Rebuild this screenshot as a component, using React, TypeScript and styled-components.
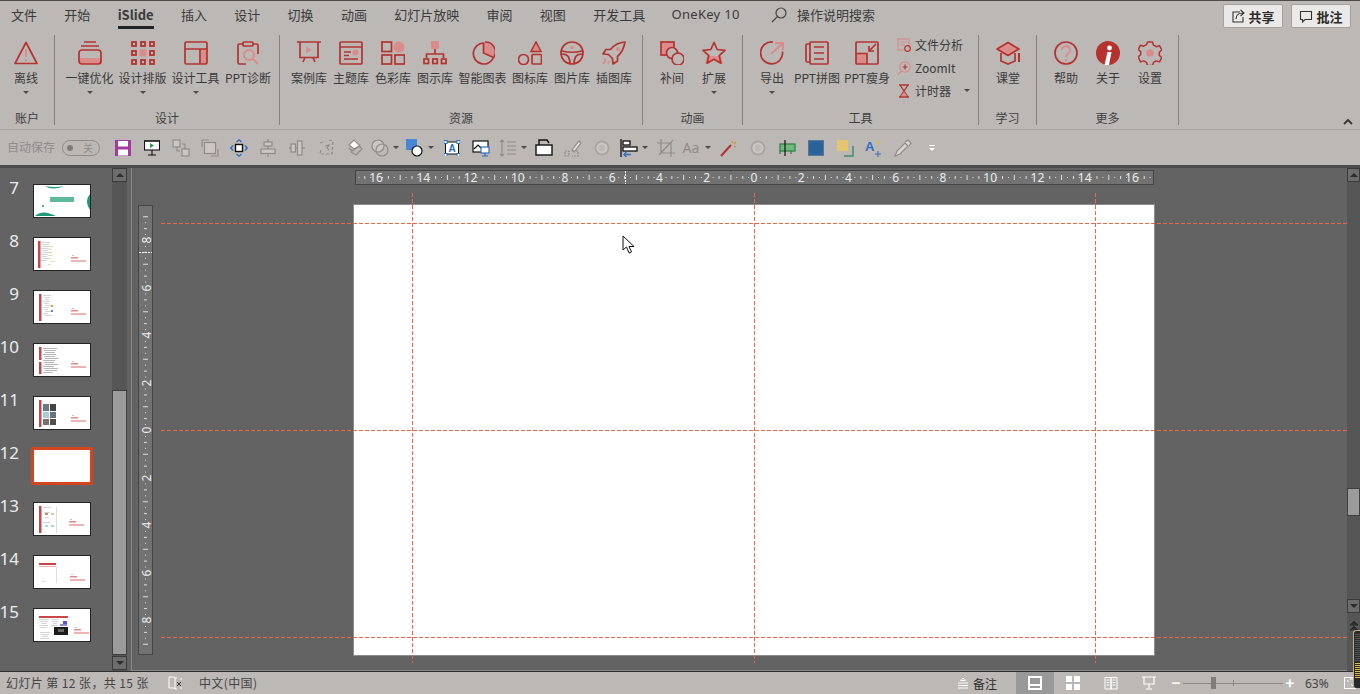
import React from "react";
import styled, { createGlobalStyle } from "styled-components";

const RED = "#b5322f";
const PALE = "#d98c8a";
const GRAY = "#8f8b89";
const DARK = "#3a3a3a";
const UI_FONT = `"Noto Sans CJK SC", "Noto Sans", sans-serif`;

const Global = createGlobalStyle`
  html, body { margin: 0; padding: 0; background: #bcb8b5; overflow: hidden; }
  * { box-sizing: border-box; }
`;

const Page = styled.div`
  position: relative;
  width: 1360px;
  height: 694px;
  display: flex;
  flex-direction: column;
  overflow: hidden;
  background: #bcb8b5;
  color: ${DARK};
  font-family: ${UI_FONT};
  font-size: 12px;
  border-top: 1px solid #4c4c4c;
`;

/* ---------- tab row ---------- */
const TabBar = styled.div`
  height: 29px;
  display: flex;
  align-items: flex-start;
  padding-left: 11px;
  gap: 27.3px;
  flex: none;
`;
const Tab = styled.div<{ $active?: boolean }>`
  height: 28px;
  line-height: 27px;
  font-size: 13px;
  white-space: nowrap;
  font-weight: ${(p) => (p.$active ? 700 : 400)};
  border-bottom: 3px solid ${(p) => (p.$active ? "#222" : "transparent")};
`;
const Latin = styled(Tab)`
  font-family: "Noto Sans", sans-serif;
  letter-spacing: 0.3px;
  margin-left: -1px;
`;
const SearchBox = styled.div`
  display: flex;
  align-items: center;
  gap: 10px;
  height: 27px;
  margin-left: 4px;
  font-size: 13px;
`;
const TopActions = styled.div`
  margin-left: auto;
  margin-right: 9px;
  margin-top: 3px;
  display: flex;
  gap: 8px;
`;
const TopButton = styled.div`
  width: 60px;
  height: 24px;
  display: flex;
  align-items: center;
  justify-content: center;
  gap: 3px;
  background: #ebe9e7;
  border: 1px solid #a5a19e;
  border-radius: 2px;
  font-size: 13px;
  font-weight: 700;
  color: #2b2b2b;
`;

/* ---------- ribbon ---------- */
const Ribbon = styled.div`
  position: relative;
  height: 100px;
  flex: none;
  display: flex;
  align-items: flex-start;
  padding-top: 5px;
  border-bottom: 1px solid #a5a19e;
`;
const Group = styled.section<{ $w: number }>`
  width: ${(p) => p.$w}px;
  height: 90px;
  flex: none;
  display: flex;
  flex-direction: column;
  border-right: 1px solid #858280;
`;
const GroupItems = styled.div<{ $pad: number }>`
  flex: 1;
  display: flex;
  align-items: flex-start;
  padding-left: ${(p) => p.$pad}px;
`;
const GroupLabel = styled.div`
  height: 16px;
  line-height: 17px;
  text-align: center;
  font-size: 12px;
  color: #3f3f3f;
`;
const Item = styled.div<{ $w: number }>`
  width: ${(p) => p.$w}px;
  flex: none;
  display: flex;
  flex-direction: column;
  align-items: center;
  padding-top: 6px;
`;
const ItemText = styled.div`
  margin-top: 4px;
  height: 17px;
  line-height: 17px;
  white-space: nowrap;
  font-size: 12px;
`;
const Caret = styled.span`
  display: block;
  width: 0;
  height: 0;
  border-left: 3px solid transparent;
  border-right: 3px solid transparent;
  border-top: 3px solid #4a4a4a;
`;
const ItemCaret = styled(Caret)`
  margin-top: 5px;
`;
const SmallColumn = styled.div`
  display: flex;
  flex-direction: column;
  margin-left: 4px;
  margin-top: -2px;
`;
const SmallRow = styled.div`
  height: 23px;
  display: flex;
  align-items: center;
  gap: 4px;
  font-size: 12px;
  white-space: nowrap;
`;
const RowCaret = styled(Caret)`
  margin-left: 9px;
`;
const Collapse = styled.div`
  position: absolute;
  right: 7px;
  bottom: 2px;
  display: flex;
`;

/* ---------- quick access ---------- */
const Quick = styled.div`
  height: 35px;
  flex: none;
  display: flex;
  align-items: center;
  padding-left: 7px;
`;
const AutoSave = styled.div`
  color: ${GRAY};
  font-size: 12px;
  white-space: nowrap;
  width: 55px;
  margin-bottom: 2px;
`;
const Toggle = styled.div`
  width: 38px;
  height: 16px;
  margin-right: 8px;
  border: 1px solid ${GRAY};
  border-radius: 8px;
  display: flex;
  align-items: center;
  justify-content: space-between;
  padding: 0 6px 0 4px;
  color: ${GRAY};
  font-size: 10px;
  line-height: 14px;
`;
const ToggleDot = styled.span`
  width: 6px;
  height: 6px;
  border-radius: 50%;
  background: #7d7a78;
`;
const QSlot = styled.div<{ $w: number }>`
  width: ${(p) => p.$w}px;
  flex: none;
  display: flex;
  align-items: center;
  justify-content: center;
`;
const QCaret = styled(Caret)`
  margin-left: 4px;
`;

/* ---------- workspace ---------- */
const Workspace = styled.div`
  flex: 1;
  min-height: 0;
  display: flex;
  background: #636363;
  border-top: 3px solid #4b4b4b;
  border-bottom: 1px solid #2f2f2f;
`;
const SlidePane = styled.div`
  width: 112px;
  flex: none;
  padding-top: 16px;
  display: flex;
  flex-direction: column;
  gap: 19px;
`;
const SlideRow = styled.div`
  height: 34px;
  display: flex;
  align-items: flex-start;
  padding-right: 21px;
  justify-content: flex-end;
  position: relative;
`;
const SlideNo = styled.span`
  position: absolute;
  right: 93px;
  top: -7px;
  font-family: "Noto Sans", sans-serif;
  font-size: 17px;
  line-height: 22px;
  color: #ededed;
`;
const Thumb = styled.div<{ $active?: boolean }>`
  width: 58px;
  height: 34px;
  background: #fff;
  border: 1px solid ${(p) => (p.$active ? "#d2451f" : "#242424")};
  outline: ${(p) => (p.$active ? "2px solid #d2451f" : "none")};
  display: flex;
`;
const ScrollTrack = styled.div<{ $w: number }>`
  width: ${(p) => p.$w}px;
  flex: none;
  background: #565656;
  display: flex;
  flex-direction: column;
  position: relative;
`;
const ScrollBtn = styled.div<{ $mt?: number }>`
  height: 14px;
  margin-top: ${(p) => p.$mt ?? 0}px;
  background: #6d6d6d;
  border: 1px solid #3b3b3b;
  display: flex;
  align-items: center;
  justify-content: center;
  flex: none;
`;
const ScrollUp = styled.span`
  width: 0;
  height: 0;
  border-left: 4px solid transparent;
  border-right: 4px solid transparent;
  border-bottom: 4px solid #2d2d2d;
`;
const ScrollDown = styled.span`
  width: 0;
  height: 0;
  border-left: 4px solid transparent;
  border-right: 4px solid transparent;
  border-top: 4px solid #2d2d2d;
`;
const ScrollThumb = styled.div<{ $mt: number; $h: number }>`
  height: ${(p) => p.$h}px;
  margin-top: ${(p) => p.$mt}px;
  background: #9b9b9b;
  border: 1px solid #3f3f3f;
  flex: none;
`;
const PageJump = styled.div`
  margin-top: 8px;
  display: flex;
  justify-content: center;
`;
const Editor = styled.div`
  position: relative;
  flex: 1;
  margin-left: 4px;
  padding-top: 2px;
  border-left: 1px solid #8a8a8a;
  border-bottom: 1px solid #8a8a8a;
`;
const TopRuler = styled.div`
  position: relative;
  width: 799px;
  height: 15px;
  margin-left: 223px;
  background: #727272;
  border: 1px solid #454545;
  display: flex;
`;
const SlideArea = styled.div`
  display: flex;
  align-items: flex-start;
  margin-top: 19px;
  padding-left: 6px;
`;
const LeftRuler = styled.div`
  position: relative;
  width: 15px;
  height: 450px;
  margin-top: 1px;
  background: #727272;
  border: 1px solid #454545;
  display: flex;
  flex: none;
`;
const Slide = styled.div`
  width: 802px;
  height: 452px;
  margin-left: 200px;
  background: #fff;
  border: 1px solid #8c8c8c;
  flex: none;
`;
const TopNum = styled.span`
  position: absolute;
  top: 0;
  line-height: 13px;
  font-family: "Noto Sans", sans-serif;
  font-size: 12px;
  color: #ececec;
  transform: translateX(-50%);
`;
const LeftNum = styled.span`
  position: absolute;
  left: 6.5px;
  line-height: 13px;
  font-family: "Noto Sans", sans-serif;
  font-size: 12px;
  color: #ececec;
  transform: translate(-50%, -50%) rotate(-90deg);
`;
const HGuide = styled.div<{ $top: number }>`
  position: absolute;
  left: 29px;
  right: 0;
  top: ${(p) => p.$top}px;
  height: 1px;
  background: repeating-linear-gradient(90deg, #e2694a 0 4px, transparent 4px 6px);
`;
const VGuide = styled.div<{ $left: number }>`
  position: absolute;
  left: ${(p) => p.$left}px;
  top: 25px;
  height: 470px;
  width: 1px;
  background: repeating-linear-gradient(180deg, #e2694a 0 4px, transparent 4px 6px);
`;
const Cursor = styled.div`
  position: absolute;
  left: 490px;
  top: 67px;
  display: flex;
`;
const RecorderWidget = styled.div`
  position: absolute;
  right: 0;
  top: 629px;
  width: 7px;
  height: 58px;
  background: #2a2a2a;
  border-left: 1px solid #b9ab8c;
  border-top: 1px solid #b9ab8c;
  border-radius: 3px 0 0 3px;
  display: flex;
`;

/* ---------- status bar ---------- */
const Status = styled.div`
  height: 22px;
  flex: none;
  display: flex;
  align-items: center;
  padding-left: 6px;
  color: #444;
  font-size: 12px;
`;
const StatusText = styled.span`
  white-space: nowrap;
  letter-spacing: 0.4px;
  margin-bottom: 2px;
`;
const StatusIcon = styled.span`
  display: flex;
  margin: 0 17px 0 19px;
`;
const Notes = styled.div`
  margin-left: auto;
  display: flex;
  align-items: center;
  gap: 4px;
  margin-right: 19px;
  color: #2e2e2e;
`;
const ViewBtn = styled.div<{ $active?: boolean }>`
  width: 38px;
  height: 22px;
  display: flex;
  align-items: center;
  justify-content: center;
  background: ${(p) => (p.$active ? "#999" : "transparent")};
`;
const ZoomArea = styled.div`
  display: flex;
  align-items: center;
  margin-left: 1px;
  padding-right: 4px;
`;
const ZoomSign = styled.span`
  width: 14px;
  text-align: center;
  color: #fff;
  font-size: 15px;
  font-weight: 700;
  line-height: 20px;
`;
const ZoomSlider = styled.div`
  position: relative;
  width: 100px;
  height: 12px;
  display: flex;
  align-items: center;
`;
const ZoomLine = styled.span`
  flex: 1;
  height: 1px;
  background: #8a8785;
`;
const ZoomTick = styled.span`
  position: absolute;
  left: 50px;
  top: 3px;
  width: 1px;
  height: 6px;
  background: #8a8785;
`;
const ZoomThumb = styled.span`
  position: absolute;
  left: 28px;
  top: 0;
  width: 5px;
  height: 12px;
  background: #7e7b79;
`;
const ZoomPct = styled.span`
  font-family: "Noto Sans", sans-serif;
  width: 47px;
  padding-left: 8px;
  color: #444;
`;

/* ---------- icon helpers ---------- */
type SvgProps = { s?: number; v?: number; sw?: number; c?: string; children: React.ReactNode };
const Ico = ({ s = 24, v, sw = 1.7, c = RED, children }: SvgProps) => (
  <svg
    width={s}
    height={s}
    viewBox={`0 0 ${v ?? s} ${v ?? s}`}
    fill="none"
    stroke={c}
    strokeWidth={sw}
    style={{ display: "block", flex: "none" }}
  >
    {children}
  </svg>
);
const pale = { fill: PALE, stroke: "none" };

const ribbonIcons: Record<string, React.ReactNode> = {
  warn: (
    <>
      <path d="M12 1.5 L23 22.5 H1 Z" strokeLinejoin="round" />
      <path d="M12 8v8M12 18v2.5" stroke={PALE} strokeWidth="2" />
    </>
  ),
  stack: (
    <>
      <rect x="1" y="17" width="22" height="6" {...pale} />
      <path d="M6 1h12M3 5h18" />
      <rect x="1" y="9" width="22" height="14" rx="3" />
    </>
  ),
  grid: (
    <>
      {[0, 1, 2].flatMap((r) =>
        [0, 1, 2].map((c) =>
          r === 1 && c === 1 ? (
            <rect key="m" x="8.5" y="8.5" width="7" height="7" {...pale} />
          ) : (
            <rect key={`${r}${c}`} x={1 + c * 9} y={1 + r * 9} width="4" height="4" strokeWidth="1.8" />
          )
        )
      )}
    </>
  ),
  layout: (
    <>
      <rect x="17" y="8" width="6" height="15" {...pale} />
      <rect x="1" y="1" width="22" height="22" rx="1.5" />
      <path d="M1 8h22M16 8v15" />
    </>
  ),
  clip: (
    <>
      <path d="M7 3H3.5A1.5 1.5 0 0 0 2 4.5v17A1.5 1.5 0 0 0 3.5 23H10M17 3h3.5A1.5 1.5 0 0 1 22 4.5V13" />
      <rect x="7" y="1" width="10" height="4" rx="1" />
      <circle cx="13" cy="14" r="5" stroke={PALE} strokeWidth="2" />
      <path d="M17 18l5 5" stroke={PALE} strokeWidth="2" />
    </>
  ),
  board: (
    <>
      <path d="M0 1h24M3 1v15.5h18V1M6 21l2-4.5M18 21l-2-4.5" />
      <path d="M9 5.5l6 3.5-6 3.5z" {...pale} />
    </>
  ),
  theme: (
    <>
      <rect x="1" y="1" width="22" height="22" rx="1" />
      <path d="M1 6h22M5 11h7M5 14.5h5M5 18h14" />
      <circle cx="16.5" cy="11.5" r="3" {...pale} />
    </>
  ),
  colors: (
    <>
      <rect x="1" y="1" width="9.5" height="9.5" />
      <circle cx="18" cy="6" r="5.5" {...pale} />
      <rect x="1" y="14" width="9.5" height="9" />
      <rect x="14" y="14" width="9.5" height="9" />
    </>
  ),
  org: (
    <>
      <rect x="8" y="0" width="8" height="8" {...pale} />
      <path d="M12 8v5M3.5 17v-4h17v4" />
      <rect x="1" y="18" width="4.5" height="4.5" />
      <rect x="9.8" y="18" width="4.5" height="4.5" />
      <rect x="18.5" y="18" width="4.5" height="4.5" />
    </>
  ),
  pie: (
    <>
      <path d="M13 11V1.5a10.5 10.5 0 0 1 9.5 15z" {...pale} />
      <path d="M12.5 2a10.5 10.5 0 1 0 10 14.5L12.5 12z" />
      <path d="M14 1a10 10 0 0 1 9 15" />
    </>
  ),
  shapes: (
    <>
      <path d="M18 1l5 9.5H13z" fill={PALE} strokeWidth="1.5" />
      <circle cx="5.5" cy="18.5" r="5" />
      <rect x="14" y="13.5" width="9.5" height="9.5" rx="1" />
    </>
  ),
  wheel: (
    <>
      <circle cx="12" cy="12" r="11" />
      <path d="M1.5 13c4 0 6 1 7 3s1.5 4 1.5 6.5M22.5 13c-4 0-6 1-7 3s-1.5 4-1.5 6.5M2 10c6 1.5 14 1.5 20 0" />
      <circle cx="12" cy="6.5" r="1.8" {...pale} />
    </>
  ),
  rocket: (
    <>
      <path d="M23 1c-6 .5-11 3-14.5 7.5H4L1 13l5.5.5 4 4 .5 5.5 4.5-3v-4.5c4.500-4 6.500-9 7.500-14.500z" strokeLinejoin="round" />
      <circle cx="16" cy="8" r="2" {...pale} />
      <path d="M1 23l3-4M2 19l1.500-1.500M6 22l1.500-2" stroke={PALE} />
    </>
  ),
  tween: (
    <>
      <rect x="1" y="1" width="13" height="13" {...pale} />
      <rect x="1" y="1" width="13" height="13" />
      <circle cx="12" cy="12" r="5.5" fill="#bcb8b5" />
      <circle cx="18" cy="18" r="6" fill="#bcb8b5" />
    </>
  ),
  star: (
    <>
      <path d="M5 15h14l2 8-9-4-9 4z" {...pale} />
      <path d="M12 1.5l3.2 7 7.8.8-5.8 5.3 1.7 7.6-6.9-4-6.9 4 1.7-7.6L1 9.3l7.8-.8z" strokeLinejoin="round" />
    </>
  ),
  export: (
    <>
      <path d="M22.5 10.5A11 11 0 1 1 13 1" />
      <path d="M11 13L22 3M15 2h8v7" stroke={PALE} strokeWidth="2" />
    </>
  ),
  book: (
    <>
      <path d="M5 3H2.5A1.5 1.5 0 0 0 1 4.5v15A1.5 1.5 0 0 0 2.5 21H5" />
      <rect x="5" y="1" width="18" height="22" rx="1" />
      <path d="M9 6h10M9 12h10M9 18h10" />
    </>
  ),
  slim: (
    <>
      <rect x="1" y="13" width="10" height="10" {...pale} />
      <rect x="1" y="1" width="22" height="22" rx="1" />
      <path d="M1 12.5h11V23M21 3l-7 7M14 5v5h5" />
    </>
  ),
  cap: (
    <>
      <path d="M12 1.5L23 8l-11 6.5L1 8z" fill={PALE} strokeLinejoin="round" />
      <path d="M5 12v8l7 3 7-3v-8" />
      <path d="M23 12v9" strokeWidth="2" />
    </>
  ),
  help: (
    <>
      <circle cx="12" cy="12" r="11" />
      <path d="M8 9a4 4 0 1 1 6 3.5c-1.4.9-2 1.500-2 3.500" stroke={PALE} strokeWidth="2" />
      <circle cx="12" cy="19" r="1.2" {...pale} />
    </>
  ),
  info: (
    <>
      <circle cx="12" cy="12" r="12" fill={RED} stroke="none" />
      <circle cx="13.5" cy="7" r="2.4" fill="#fff" stroke="none" />
      <path d="M11.5 11h4L13 24H8.500z" fill="#fff" stroke="none" />
    </>
  ),
  gear: (
    <>
      <path d="M9.5 1h5l1 3.2 2.8 1.5 3.2-1 2.3 4.3-2.5 2.2v3.2l2.5 2.1-2.3 4.4-3.2-1-2.8 1.5-1 3.1h-5l-1-3.1-2.8-1.500-3.2 1L.2 15.900l2.500-2.100v-3.200L.2 8.400 2.500 4.200l3.200 1 2.800-1.500z" strokeLinejoin="round" strokeWidth="1.5" />
      <circle cx="12" cy="12" r="3.8" {...pale} />
    </>
  ),
};

const thinGray = { s: 18, sw: 1.2, c: GRAY };
const QIcons: Record<string, React.ReactNode> = {
  save: (
    <Ico s={16}>
      <rect x="0" y="0" width="16" height="16" fill="#a43a9c" stroke="none" />
      <rect x="3" y="1" width="10" height="5.5" fill="#fff" stroke="none" />
      <rect x="3" y="9.5" width="10" height="6" fill="#fff" stroke="none" />
    </Ico>
  ),
  present: (
    <Ico s={16} sw={1.1} c="#111">
      <rect x=".5" y="1" width="15" height="9" fill="#fff" />
      <path d="M0 1h16M8 10v5M4 15h8" />
      <path d="M6 3l4 2.500L6 8z" fill="#2f9a4a" stroke="none" />
    </Ico>
  ),
  group: (
    <Ico {...thinGray}>
      <rect x="1" y="1" width="7" height="7" fill="#c9c6c4" />
      <rect x="10" y="10" width="7" height="7" fill="#c9c6c4" />
      <path d="M8 12H5V8M10 5h3v5" />
    </Ico>
  ),
  ungroup: (
    <Ico {...thinGray}>
      <path d="M1 8V1h7M10 17h7v-7" />
      <rect x="3.5" y="3.5" width="11" height="11" fill="#c9c6c4" />
    </Ico>
  ),
  move: (
    <Ico s={18} sw={1.4} c="#2f6fc0">
      <rect x="5.5" y="5.5" width="7" height="7" fill="#fff" stroke="#111" />
      <path d="M6.5 3L9 .8 11.500 3M6.500 15L9 17.200 11.500 15M3 6.500L.8 9 3 11.500M15 6.500L17.200 9 15 11.500" />
    </Ico>
  ),
  alignC: (
    <Ico {...thinGray}>
      <path d="M9 0v18" />
      <rect x="5" y="3" width="8" height="4" fill="#c9c6c4" />
      <rect x="2" y="10" width="14" height="4.5" fill="#c9c6c4" />
    </Ico>
  ),
  alignM: (
    <Ico {...thinGray}>
      <path d="M1 9h16" />
      <rect x="3" y="5" width="4.5" height="8" fill="#c9c6c4" />
      <rect x="9.5" y="2" width="4.5" height="14" fill="#c9c6c4" />
    </Ico>
  ),
  warp: (
    <Ico s={18} sw={1.2} c={GRAY}>
      <path d="M3 4l5-2M12 1l4 1-1 13H3l1-5" strokeDasharray="3 2" />
      <path d="M8 7l4-1-2 3 2 2" />
    </Ico>
  ),
  paint: (
    <Ico {...thinGray}>
      <path d="M3 6l5-5 6 6-6 3z" fill="#fff" />
      <path d="M5 13l8-6 3 3-6 6zM3 9l3 3" />
    </Ico>
  ),
  merge: (
    <Ico {...thinGray}>
      <circle cx="7" cy="7" r="6" fill="#c9c6c4" />
      <circle cx="11" cy="11" r="6" />
    </Ico>
  ),
  shape: (
    <Ico s={18} sw={1.2} c="#111">
      <rect x="0" y="0" width="11" height="11" fill="#4a86d8" stroke="none" />
      <circle cx="11" cy="12" r="5" fill="#fff" />
    </Ico>
  ),
  textBox: (
    <Ico s={16} sw={1} c="#111">
      <rect x="1.5" y="2" width="13" height="12" fill="#fff" />
      {[
        [0, 0],
        [13, 0],
        [0, 13],
        [13, 13],
      ].map(([x, y]) => (
        <rect key={`${x}${y}`} x={x} y={y + 0.5} width="3" height="3" fill="#fff" stroke="#2f6fc0" />
      ))}
      <text x="8" y="12" fontSize="10" fontWeight="700" textAnchor="middle" fill="#2f6fc0" stroke="none" fontFamily="Liberation Sans, sans-serif">
        A
      </text>
    </Ico>
  ),
  picture: (
    <Ico s={18} sw={1.2} c="#111">
      <rect x="1" y="2" width="15" height="11" fill="#fff" />
      <path d="M2 10l4-4 3 3" />
      <rect x="9" y="8" width="8" height="6" fill="#fff" stroke="#2f6fc0" />
      <path d="M13 14v3M10 17h6" stroke="#2f6fc0" />
    </Ico>
  ),
  spacing: (
    <Ico {...thinGray}>
      <path d="M3 1v16M1 3l2-2 2 2M1 15l2 2 2-2M8 3h9M8 7h9M8 11h9M8 15h9" />
    </Ico>
  ),
  print: (
    <Ico s={18} sw={1.4} c="#111">
      <path d="M4 6V1h8l2 3" />
      <rect x="1" y="6" width="16" height="10" fill="#fff" />
    </Ico>
  ),
  brush: (
    <Ico {...thinGray}>
      <path d="M8 11l7-9 2 2-7 9z" fill="#e3e1df" />
      <path d="M1 12h4v5H1zM9 12h5v5H8" strokeDasharray="2 1" />
    </Ico>
  ),
  ring: (
    <Ico s={18} sw={2} c="#a7a3a1">
      <circle cx="9" cy="9" r="6.5" />
      <circle cx="9" cy="9" r="4.5" stroke="#c9c6c4" />
    </Ico>
  ),
  alignL: (
    <Ico s={18} sw={1.3} c="#111">
      <path d="M1 0v18" />
      <rect x="3" y="2" width="7" height="4" fill="#fff" />
      <rect x="3" y="8" width="14" height="4" fill="#fff" />
      <path d="M11 15.500H4M6.500 13L4 15.500 6.500 18" stroke="#2f6fc0" />
    </Ico>
  ),
  crop: (
    <Ico {...thinGray}>
      <path d="M0 4h14v14M4 0v14h14M16 1L2 16" />
    </Ico>
  ),
  wand: (
    <Ico s={18} sw={2} c="#b5322f">
      <path d="M2 17L12 6" />
      <path d="M13 2l1 2M17 3l-2 2M17 8l-2-1" stroke="#d98c2a" strokeWidth="1.2" />
    </Ico>
  ),
  anchor: (
    <Ico s={18} sw={1.2} c="#111">
      <rect x="2" y="5" width="15" height="7" fill="#6cbb7d" stroke="#2f7a44" />
      <path d="M7 1v16" />
      <path d="M2 12v3M13 12v3" stroke="#2f7a44" />
    </Ico>
  ),
  fill: (
    <Ico s={16}>
      <rect x="0" y="0" width="16" height="16" fill="#2c6299" stroke="#888" strokeWidth="1" />
    </Ico>
  ),
  layers: (
    <Ico s={18} sw={1.5} c="#3f8a72">
      <path d="M8 17h9V7" />
      <rect x="1" y="1" width="11" height="11" fill="#e6c36e" stroke="none" />
    </Ico>
  ),
  fontFx: (
    <Ico s={18} sw={1} c="#2f6fc0">
      <text x="0" y="12" fontSize="13" fontWeight="700" fill="#2f6fc0" stroke="none" fontFamily="Liberation Sans, sans-serif">
        A
      </text>
      <path d="M13 12v6M10 15h6" />
      <path d="M13 2v4M11 4h4" stroke="#d9b84f" />
    </Ico>
  ),
  picker: (
    <Ico {...thinGray}>
      <path d="M1 17l2-5 8-8 3 3-8 8z" fill="#d6d4d2" />
      <path d="M11 3l3-2 3 3-2 3" fill="#d6d4d2" />
    </Ico>
  ),
};

const qat: { k: string; w: number; caret?: boolean }[] = [
  { k: "save", w: 29 },
  { k: "present", w: 29 },
  { k: "group", w: 29 },
  { k: "ungroup", w: 29 },
  { k: "move", w: 29 },
  { k: "alignC", w: 29 },
  { k: "alignM", w: 29 },
  { k: "warp", w: 29 },
  { k: "paint", w: 29 },
  { k: "merge", w: 31, caret: true },
  { k: "shape", w: 39, caret: true },
  { k: "textBox", w: 25 },
  { k: "picture", w: 33 },
  { k: "spacing", w: 31, caret: true },
  { k: "print", w: 31 },
  { k: "brush", w: 27 },
  { k: "ring", w: 31 },
  { k: "alignL", w: 33, caret: true },
  { k: "crop", w: 31 },
  { k: "aa", w: 31, caret: true },
  { k: "wand", w: 31 },
  { k: "ring", w: 29 },
  { k: "anchor", w: 29 },
  { k: "fill", w: 29 },
  { k: "layers", w: 29 },
  { k: "fontFx", w: 29 },
  { k: "picker", w: 29 },
];

const AaText = styled.span`
  color: ${GRAY};
  font-family: "Noto Sans", sans-serif;
  font-size: 14px;
  line-height: 18px;
  width: 18px;
`;
const MoreMark = styled.span`
  display: flex;
  flex-direction: column;
  align-items: center;
  gap: 2px;
`;
const MoreBar = styled.span`
  width: 6px;
  height: 1px;
  background: #fff;
`;
const MoreTri = styled.span`
  width: 0;
  height: 0;
  border-left: 3px solid transparent;
  border-right: 3px solid transparent;
  border-top: 3px solid #fff;
`;

/* ---------- ribbon data ---------- */
type RibbonItem = { icon: string; label: string; w: number; caret?: boolean };
type RibbonGroup = { name: string; w: number; pad: number; items: RibbonItem[]; small?: boolean };

const groups: RibbonGroup[] = [
  { name: "账户", w: 55, pad: 0, items: [{ icon: "warn", label: "离线", w: 52, caret: true }] },
  {
    name: "设计",
    w: 225,
    pad: 8,
    items: [
      { icon: "stack", label: "一键优化", w: 53, caret: true },
      { icon: "grid", label: "设计排版", w: 53, caret: true },
      { icon: "layout", label: "设计工具", w: 53, caret: true },
      { icon: "clip", label: "PPT诊断", w: 52 },
    ],
  },
  {
    name: "资源",
    w: 363,
    pad: 8,
    items: [
      { icon: "board", label: "案例库", w: 42 },
      { icon: "theme", label: "主题库", w: 42 },
      { icon: "colors", label: "色彩库", w: 42 },
      { icon: "org", label: "图示库", w: 42 },
      { icon: "pie", label: "智能图表", w: 53 },
      { icon: "shapes", label: "图标库", w: 42 },
      { icon: "wheel", label: "图片库", w: 42 },
      { icon: "rocket", label: "插图库", w: 42 },
    ],
  },
  {
    name: "动画",
    w: 100,
    pad: 8,
    items: [
      { icon: "tween", label: "补间", w: 42 },
      { icon: "star", label: "扩展", w: 42, caret: true },
    ],
  },
  {
    name: "工具",
    w: 236,
    pad: 8,
    small: true,
    items: [
      { icon: "export", label: "导出", w: 42, caret: true },
      { icon: "book", label: "PPT拼图", w: 48 },
      { icon: "slim", label: "PPT瘦身", w: 52 },
    ],
  },
  { name: "学习", w: 58, pad: 8, items: [{ icon: "cap", label: "课堂", w: 42 }] },
  {
    name: "更多",
    w: 142,
    pad: 8,
    items: [
      { icon: "help", label: "帮助", w: 42 },
      { icon: "info", label: "关于", w: 42 },
      { icon: "gear", label: "设置", w: 42 },
    ],
  },
];

/* ---------- tiny slide pictures ---------- */
type Box = [number, number, number, number, string];
const RB = "#c8464a";
const PK = "#eeb4b2";
const GR = "#d4d4d4";
const textCol = (x: number, y: number, n: number, w: number, c: string, step = 2): Box[] =>
  Array.from({ length: n }, (_, i) => [x + (i % 3), y + i * step, w - (i * 7) % 5, 1, c] as Box);
const memo = (x: number, y: number): Box[] => [
  [x + 1, y - 2, 2, 1, PK],
  [x, y, 7, 1.5, "#e08a8a"],
  [x, y + 3, 15, 2, PK],
];

const thumbs: { no: number; boxes?: Box[]; extra?: React.ReactNode; active?: boolean }[] = [
  {
    no: 7,
    extra: (
      <>
        <path d="M11 1 Q18 6 30 1 Q20 3 11 1Z" fill="#1f9a78" />
        <rect x="16" y="12" width="24" height="5" fill="#5dbb9c" />
        <path d="M56 9 Q50 16 56 25Z" fill="#1f9a78" />
        <path d="M1 31 Q8 24 22 31Z" fill="#1f9a78" />
        <rect x="8" y="20" width="2" height="2" fill="#58ad90" />
      </>
    ),
  },
  {
    no: 8,
    boxes: [[4, 3, 2.5, 27, RB], ...textCol(7, 4, 10, 9, GR), ...textCol(14, 8, 7, 5, "#ecd9ae", 3), ...memo(37, 19)],
  },
  {
    no: 9,
    boxes: [[5, 3, 2.5, 27, RB], ...textCol(9, 4, 11, 8, GR), [17, 14, 2, 2, "#e6a23c"], [17, 19, 2, 2, "#5b8fd6"], ...memo(37, 19)],
  },
  {
    no: 10,
    boxes: [[5, 3, 2.5, 13, RB], [5, 18, 2.5, 12, RB], ...textCol(9, 4, 13, 14, "#b8b8b8"), ...memo(37, 19)],
  },
  {
    no: 11,
    boxes: [
      [5, 3, 2.5, 27, RB],
      [9, 7, 6, 7, "#6c7a86"],
      [16, 7, 6, 7, "#444"],
      [9, 15, 6, 6, "#a9cbd8"],
      [16, 15, 6, 6, "#66737c"],
      [9, 22, 6, 6, "#7b6f6b"],
      [16, 22, 6, 6, "#505050"],
      ...memo(37, 20),
    ],
  },
  { no: 12, active: true },
  {
    no: 13,
    boxes: [
      [5, 3, 2.5, 27, RB],
      ...textCol(9, 4, 4, 8, GR, 5),
      [11, 10, 3, 2, "#c28b6f"],
      [17, 10, 3, 2, "#e2c3a5"],
      [11, 22, 3, 2, "#a7d8da"],
      [17, 22, 3, 2, "#a7d8da"],
      [22, 4, 1, 26, "#dcdcdc"],
      ...memo(35, 18),
    ],
  },
  {
    no: 14,
    boxes: [[5, 7, 17, 2, RB], [5, 10, 17, 1, PK], [22, 11, 1, 16, "#dcdcdc"], [8, 25, 3, 1, GR], ...memo(36, 20)],
  },
  {
    no: 15,
    boxes: [
      [5, 7, 29, 2, RB],
      ...textCol(5, 10, 5, 10, GR),
      ...textCol(17, 10, 4, 8, GR),
      [29, 12, 4, 5, "#5a55d8"],
      [26, 15, 7, 2, "#8a86e6"],
      [20, 18, 14, 8, "#1c1c1c"],
      [24, 20, 6, 3, "#666"],
      ...textCol(6, 23, 4, 10, GR),
      ...memo(40, 20),
    ],
  },
];

/* ---------- rulers ---------- */
const TOP_ZERO = 398;
const CM = 23.62;
const range = (a: number, b: number) => Array.from({ length: b - a + 1 }, (_, i) => a + i);
const TopRulerBody = () => (
  <>
    <svg width="797" height="13" style={{ display: "block" }}>
      {range(-68, 68)
        .filter((i) => i % 8 !== 0)
        .map((i) => {
          const h = i % 4 === 0 ? 5 : i % 2 === 0 ? 3 : 1;
          return <rect key={i} x={TOP_ZERO + (i * CM) / 4} y={6.5 - h / 2} width="1" height={h} fill="#dedede" />;
        })}
      <path d="M269.500 0v13" stroke="#fff" strokeDasharray="2 1" />
    </svg>
    {range(-8, 8).map((i) => (
      <TopNum key={i} style={{ left: TOP_ZERO + i * 2 * CM }}>
        {Math.abs(i) * 2}
      </TopNum>
    ))}
  </>
);
const LEFT_ZERO = 224;
const LeftRulerBody = () => (
  <>
    <svg width="13" height="448" style={{ display: "block" }}>
      {range(-36, 36)
        .filter((i) => i % 8 !== 0)
        .map((i) => {
          const w = i % 4 === 0 ? 5 : i % 2 === 0 ? 3 : 1;
          return <rect key={i} x={6.5 - w / 2} y={LEFT_ZERO + (i * 23.75) / 4} width={w} height="1" fill="#dedede" />;
        })}
      <path d="M0 46.500h13" stroke="#fff" strokeDasharray="2 1" />
    </svg>
    {range(-4, 4).map((i) => (
      <LeftNum key={i} style={{ top: LEFT_ZERO + i * 47.5 }}>
        {Math.abs(i) * 2}
      </LeftNum>
    ))}
  </>
);

const Icon = ({ name, s = 24 }: { name: string; s?: number }) => (
  <Ico s={s} v={24} sw={1.7}>
    {ribbonIcons[name]}
  </Ico>
);

export default function App() {
  return (
    <Page>
      <Global />
      <TabBar>
        <Tab>文件</Tab>
        <Tab>开始</Tab>
        <Tab $active>iSlide</Tab>
        <Tab>插入</Tab>
        <Tab>设计</Tab>
        <Tab>切换</Tab>
        <Tab>动画</Tab>
        <Tab>幻灯片放映</Tab>
        <Tab>审阅</Tab>
        <Tab>视图</Tab>
        <Tab>开发工具</Tab>
        <Latin>OneKey 10</Latin>
        <SearchBox>
          <Ico s={16} sw={1.2} c="#444">
            <circle cx="10" cy="6" r="5" />
            <path d="M6.3 9.7L1 15" />
          </Ico>
          操作说明搜索
        </SearchBox>
        <TopActions>
          <TopButton>
            <Ico s={14} sw={1.1} c="#333">
              <path d="M9 3H2v10h10V8" />
              <path d="M5 10c0-4 3-6 7-6M9.500 1L13 4l-3.500 3" />
            </Ico>
            共享
          </TopButton>
          <TopButton>
            <Ico s={14} sw={1.1} c="#333">
              <path d="M1.500 2.500h11v8H6L3.500 13v-2.500h-2z" />
            </Ico>
            批注
          </TopButton>
        </TopActions>
      </TabBar>

      <Ribbon>
        {groups.map((g) => (
          <Group key={g.name} $w={g.w}>
            <GroupItems $pad={g.pad}>
              {g.items.map((it) => (
                <Item key={it.label} $w={it.w}>
                  <Icon name={it.icon} />
                  <ItemText>{it.label}</ItemText>
                  {it.caret && <ItemCaret />}
                </Item>
              ))}
              {g.small && (
                <SmallColumn>
                  <SmallRow>
                    <Ico s={14} sw={1.2}>
                      <rect x="1" y="1" width="11" height="11" stroke={PALE} />
                      <path d="M3 4h7M3 7h5" stroke={PALE} />
                      <circle cx="10.500" cy="10.500" r="2.800" fill="#bcb8b5" />
                    </Ico>
                    文件分析
                  </SmallRow>
                  <SmallRow>
                    <Ico s={14} sw={1.2}>
                      <circle cx="8" cy="6" r="5.200" stroke={PALE} />
                      <path d="M4.500 10L1 13.500" stroke={PALE} />
                      <path d="M8 3.500v5M5.500 6h5" stroke={RED} />
                    </Ico>
                    ZoomIt
                  </SmallRow>
                  <SmallRow>
                    <Ico s={14} sw={1.3}>
                      <path d="M2 1h10M2 13h10M3 1l8 12M11 1L3 13" />
                      <path d="M4 12h6l-3-4z" fill={PALE} stroke="none" />
                    </Ico>
                    计时器
                    <RowCaret />
                  </SmallRow>
                </SmallColumn>
              )}
            </GroupItems>
            <GroupLabel>{g.name}</GroupLabel>
          </Group>
        ))}
        <Collapse>
          <Ico s={10} sw={1.8} c="#333">
            <path d="M1 7l4-4 4 4" />
          </Ico>
        </Collapse>
      </Ribbon>

      <Quick>
        <AutoSave>自动保存</AutoSave>
        <Toggle>
          <ToggleDot />关
        </Toggle>
        {qat.map((q, i) => (
          <QSlot key={i} $w={q.w}>
            {q.k === "aa" ? <AaText>Aa</AaText> : QIcons[q.k]}
            {q.caret && <QCaret />}
          </QSlot>
        ))}
        <QSlot $w={29}>
          <MoreMark>
            <MoreBar />
            <MoreTri />
          </MoreMark>
        </QSlot>
      </Quick>

      <Workspace>
        <SlidePane>
          {thumbs.map((t) => (
            <SlideRow key={t.no}>
              <SlideNo>{t.no}</SlideNo>
              <Thumb $active={t.active}>
                {!t.active && (
                  <svg width="56" height="32" style={{ display: "block" }}>
                    {t.extra}
                    {t.boxes?.map(([x, y, w, h, c], i) => (
                      <rect key={i} x={x} y={y} width={w} height={h} fill={c} />
                    ))}
                  </svg>
                )}
              </Thumb>
            </SlideRow>
          ))}
        </SlidePane>
        <ScrollTrack $w={15}>
          <ScrollBtn>
            <ScrollUp />
          </ScrollBtn>
          <ScrollThumb $mt={208} $h={265} />
          <ScrollBtn $mt={1}>
            <ScrollDown />
          </ScrollBtn>
        </ScrollTrack>
        <Editor>
          <TopRuler>
            <TopRulerBody />
          </TopRuler>
          <SlideArea>
            <LeftRuler>
              <LeftRulerBody />
            </LeftRuler>
            <Slide />
          </SlideArea>
          <HGuide $top={55} />
          <HGuide $top={262} />
          <HGuide $top={469} />
          <VGuide $left={280} />
          <VGuide $left={622} />
          <VGuide $left={963} />
          <Cursor>
            <svg width="14" height="19" viewBox="0 0 14 19">
              <path d="M1 1v14l3.500-3 2.500 6 2.500-1-2.500-5.500H12z" fill="#fff" stroke="#111" strokeWidth="1" />
            </svg>
          </Cursor>
        </Editor>
        <ScrollTrack $w={13}>
          <ScrollBtn>
            <ScrollUp />
          </ScrollBtn>
          <ScrollThumb $mt={306} $h={28} />
          <ScrollBtn $mt={83}>
            <ScrollDown />
          </ScrollBtn>
          <PageJump>
            <Ico s={10} sw={1} c="#2d2d2d">
              <path d="M1 4l4-4 4 4zM1 9l4-4 4 4z" fill="#2d2d2d" />
            </Ico>
          </PageJump>
        </ScrollTrack>
      </Workspace>

      <Status>
        <StatusText>幻灯片 第 12 张，共 15 张</StatusText>
        <StatusIcon>
          <Ico s={14} sw={1} c="#fff">
            <path d="M1 1h5l1 1v11l-1-1H1zM7 2h2M7 13h2M13 2v2M13 11v2" />
            <path d="M9 6l4 4M13 6l-4 4" stroke="#333" />
          </Ico>
        </StatusIcon>
        <StatusText>中文(中国)</StatusText>
        <Notes>
          <Ico s={12} sw={1} c="#fff">
            <path d="M6 1L3.500 3.500h5zM1 6h10M1 8.500h10M1 11h10" />
          </Ico>
          备注
        </Notes>
        <ViewBtn $active>
          <Ico s={14} sw={1.5} c="#fff">
            <path d="M0 0h14v14H0z" fill="#fff" stroke="none" />
            <rect x="2" y="2" width="10" height="6" fill="#999" stroke="none" />
            <rect x="2" y="10" width="10" height="2" fill="#999" stroke="none" />
          </Ico>
        </ViewBtn>
        <ViewBtn>
          <Ico s={14} c="#fff">
            <rect x="0" y="0" width="6" height="6" fill="#fff" stroke="none" />
            <rect x="8" y="0" width="6" height="6" fill="#fff" stroke="none" />
            <rect x="0" y="8" width="6" height="6" fill="#fff" stroke="none" />
            <rect x="8" y="8" width="6" height="6" fill="#fff" stroke="none" />
          </Ico>
        </ViewBtn>
        <ViewBtn>
          <Ico s={14} sw={1} c="#fff">
            <path d="M1 1.500h6v11.500H1zM7 1.500h6v11.500H7zM2.500 4h3M2.500 6.500h3M2.500 9h3M8.500 4h3M8.500 6.500h3M8.500 9h3" />
          </Ico>
        </ViewBtn>
        <ViewBtn>
          <Ico s={14} sw={1.2} c="#fff">
            <path d="M0 1h14M2 1v7h10V1M7 8v4M4 13h6" />
          </Ico>
        </ViewBtn>
        <ZoomArea>
          <ZoomSign>−</ZoomSign>
          <ZoomSlider>
            <ZoomLine />
            <ZoomTick />
            <ZoomThumb />
          </ZoomSlider>
          <ZoomSign>+</ZoomSign>
          <ZoomPct>63%</ZoomPct>
          <Ico s={12} sw={1} c="#fff">
            <rect x=".5" y=".5" width="11" height="11" />
            <path d="M3 3l2 2M9 9L7 7M6 2h4v4" />
          </Ico>
        </ZoomArea>
      </Status>

      <RecorderWidget>
        <svg width="6" height="56">
          {Array.from({ length: 14 }, (_, i) => (
            <rect key={i} x="1" y={3 + i * 2} width="5" height="1" fill="#555" />
          ))}
          {Array.from({ length: 8 }, (_, i) => (
            <rect key={i} x="1" y={32 + i * 2} width="5" height="1" fill="#e0bb3f" />
          ))}
        </svg>
      </RecorderWidget>
    </Page>
  );
}
